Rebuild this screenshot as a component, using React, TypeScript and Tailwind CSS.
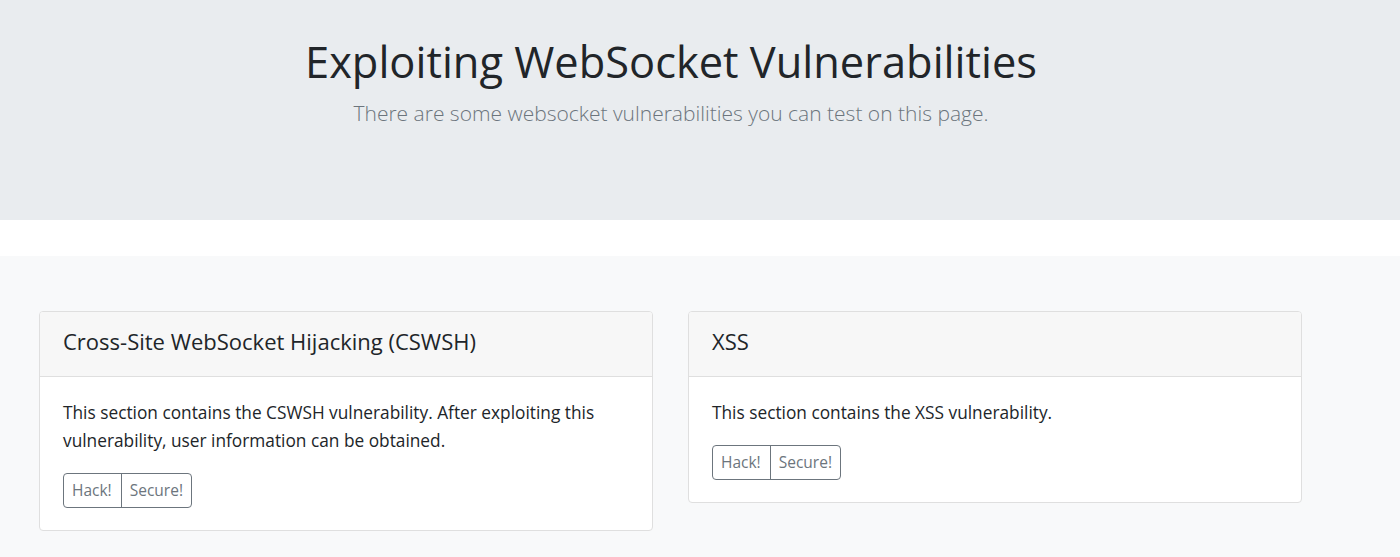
import React from 'react';

const font = { fontFamily: '"Open Sans", "Noto Sans", Arial, sans-serif' };

const Card: React.FC<{ title: string; text: string }> = ({ title, text }) => {
  return (
    <div className="w-[614px] bg-white border border-[#dfdfdf] rounded-[4px] overflow-hidden">
      <div className="h-[65px] flex items-center px-[23px] pb-[5px] bg-[#f7f7f7] border-b border-[#dfdfdf]">
        <h5 className="text-[22px] text-[#212529]">{title}</h5>
      </div>
      <div className="px-[23px] pt-[22px] pb-[22px]">
        <p className="text-[17.3px] leading-[28px] text-[#212529]">{text}</p>
        <div className="mt-[18px] inline-flex rounded-[4px] border border-[#6c757d] text-[#6c757d] text-[15.5px]">
          <button className="h-[33px] pl-[8px] pr-[9px] border-r border-[#6c757d]">Hack!</button>
          <button className="h-[33px] px-[8px]">Secure!</button>
        </div>
      </div>
    </div>
  );
};

export default function App() {
  return (
    <div className="min-h-screen bg-[#f8f9fa]" style={font}>
      <header className="h-[220px] bg-[#e9ecef]">
        <div className="w-[1342px] text-center pt-[28px]">
          <h1 className="text-[43.4px] leading-[68px] font-normal text-[#212529]">Exploiting WebSocket Vulnerabilities</h1>
          <p className="mt-[2px] text-[21px] leading-[30px] font-light text-[#6c757d]">
            There are some websocket vulnerabilities you can test on this page.
          </p>
        </div>
      </header>
      <div className="h-[36px] bg-white" />
      <section className="flex items-start gap-[35px] pl-[39px] pt-[55px] pb-[30px]">
        <Card
          title="Cross-Site WebSocket Hijacking (CSWSH)"
          text="This section contains the CSWSH vulnerability. After exploiting this vulnerability, user information can be obtained."
        />
        <Card title="XSS" text="This section contains the XSS vulnerability." />
      </section>
    </div>
  );
}
